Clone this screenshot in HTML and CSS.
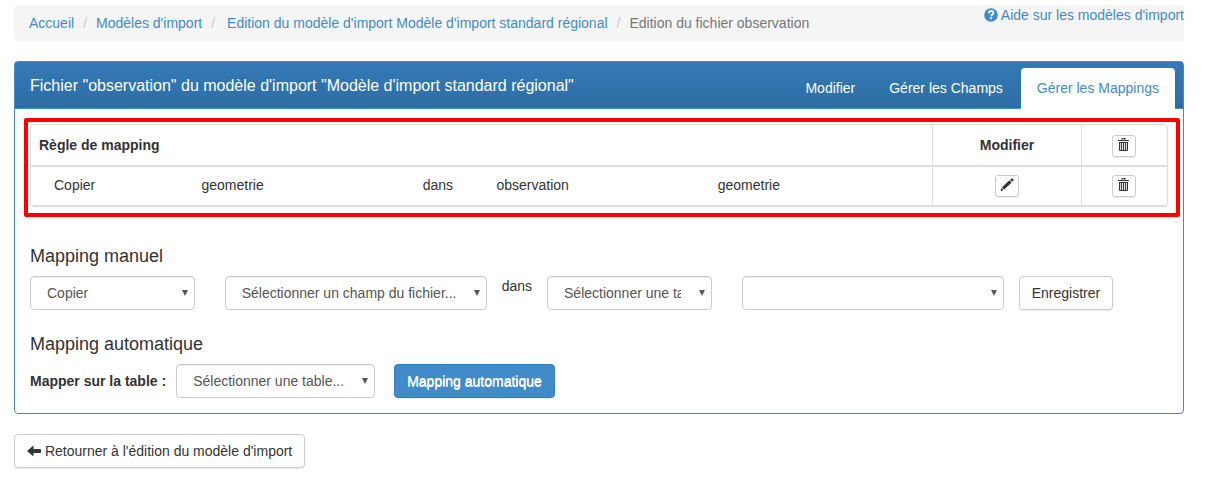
FILE: index.html
```html
<!DOCTYPE html>
<html lang="fr">
<head>
<meta charset="utf-8">
<title>Edition du fichier observation</title>
<link rel="stylesheet" href="styles.css">
</head>
<body>
<svg class="sprite" aria-hidden="true">
  <symbol id="trash" viewBox="0 0 12 14">
    <path d="M3.500 2V1q0-1 1-1h2q1 0 1 1v1H11v1H0V2zM4.500 1v1h2V1zM1 4h9v8q0 1-1 1H2q-1 0-1-1zM2.200 5v7h.9V5zm1.900 0v7h.9V5zm1.900 0v7h.9V5zm1.900 0v7h.9V5z" fill="currentColor" fill-rule="evenodd"/>
  </symbol>
  <symbol id="pencil" viewBox="0 0 14 14">
    <path d="M10.200 1.700L11.500.5q.5-.5 1 0l1 1q.5.500 0 1l-1.300 1.300zM9.500 2.300l2.200 2.200-7.500 7L2 9.300zM1.500 9.900L3.700 12 .5 13.300z" fill="currentColor"/>
  </symbol>
  <symbol id="arrow" viewBox="0 0 14 12">
    <path d="M0 6L6.500.5V4H13q1 0 1 1v2q0 1-1 1H6.500v3.500z" fill="currentColor"/>
  </symbol>
  <symbol id="help" viewBox="0 0 14 14">
    <circle cx="7" cy="7" r="6.800" fill="currentColor"/>
    <path d="M4.700 5.300C4.800 3.700 5.700 3 7.100 3s2.300.8 2.300 2C9.400 6.600 7.200 6.500 7.200 8.300" fill="none" stroke="#fff" stroke-width="1.800"/>
    <path d="M6.200 9.300h2v1.900h-2z" fill="#fff"/>
  </symbol>
</svg>
<main class="page">
  <div class="topbar">
    <nav aria-label="Fil d'Ariane">
      <ol class="breadcrumb">
        <li><a href="#">Accueil</a></li>
        <li><a href="#">Modèles d'import</a></li>
        <li class="parent"><a href="#">Edition du modèle d'import Modèle d'import standard régional</a></li>
        <li class="current">Edition du fichier observation</li>
      </ol>
    </nav>
    <a class="help" href="#"><svg class="icon"><use href="#help"/></svg> Aide sur les modèles d'import</a>
  </div>

  <section class="panel">
    <header class="panel-header">
      <h1 class="panel-title">Fichier "observation" du modèle d'import "Modèle d'import standard régional"</h1>
      <nav class="tabs">
        <a class="tab" href="#">Modifier</a>
        <a class="tab" href="#">Gérer les Champs</a>
        <a class="tab active" href="#">Gérer les Mappings</a>
      </nav>
    </header>

    <div class="highlight">
      <table class="rules">
        <thead>
          <tr>
            <th class="rule">Règle de mapping</th>
            <th class="edit">Modifier</th>
            <th class="remove"><button class="btn btn-icon" type="button" aria-label="Tout supprimer"><svg class="icon-trash"><use href="#trash"/></svg></button></th>
          </tr>
        </thead>
        <tbody>
          <tr>
            <td>
              <div class="rule-grid">
                <span class="span-2">Copier</span>
                <span class="span-3">geometrie</span>
                <span>dans</span>
                <span class="span-3">observation</span>
                <span class="span-3">geometrie</span>
              </div>
            </td>
            <td class="edit"><button class="btn btn-icon" type="button" aria-label="Modifier"><svg class="icon-pencil"><use href="#pencil"/></svg></button></td>
            <td class="remove"><button class="btn btn-icon" type="button" aria-label="Supprimer"><svg class="icon-trash"><use href="#trash"/></svg></button></td>
          </tr>
        </tbody>
      </table>
    </div>

    <form class="form">
      <h2 class="form-title">Mapping manuel</h2>
      <div class="manual">
        <div class="col-2"><select class="select" aria-label="Action"><option>Copier</option></select></div>
        <div class="col-3"><select class="select" aria-label="Champ du fichier"><option>Sélectionner un champ du fichier...</option></select></div>
        <span>dans</span>
        <div class="col-2"><select class="select" aria-label="Table"><option>Sélectionner une table...</option></select></div>
        <div class="col-3"><select class="select" aria-label="Champ de la table"><option></option></select></div>
        <button class="btn" type="button">Enregistrer</button>
      </div>
    </form>

    <form class="form form-last">
      <h2 class="form-title">Mapping automatique</h2>
      <div class="auto">
        <label for="auto-table">Mapper sur la table :</label>
        <select class="select select-auto" id="auto-table"><option>Sélectionner une table...</option></select>
        <button class="btn btn-primary" type="button">Mapping automatique</button>
      </div>
    </form>
  </section>

  <a class="btn back" href="#"><svg class="icon"><use href="#arrow"/></svg> Retourner à l'édition du modèle d'import</a>
</main>
</body>
</html>
```

FILE: styles.css
```css
* { box-sizing: border-box; }

body {
  margin: 0;
  font: 14px/20px "Liberation Sans", Arial, sans-serif;
  color: #333;
  background: #fff;
}

a { color: #428bca; text-decoration: none; }

.sprite { display: none; }

.page { padding: 5px 34px 20px 14px; }

.topbar { position: relative; margin-bottom: 20px; }

.breadcrumb {
  display: flex;
  margin: 0;
  padding: 8px 15px;
  list-style: none;
  background: #f5f5f5;
  border-radius: 4px;
}
.breadcrumb li + li::before {
  content: "/";
  padding: 0 9px;
  color: #ccc;
}
.breadcrumb .parent::before { padding-right: 12px; }
.breadcrumb .current { color: #777; }

.help { position: absolute; top: 0; right: 0; }

.icon {
  width: 14px;
  height: 14px;
  vertical-align: -2px;
}

.panel {
  border: 1px solid #428bca;
  border-radius: 4px;
  margin-bottom: 20px;
}

.panel-header {
  display: flex;
  justify-content: space-between;
  align-items: flex-end;
  padding: 6px 8px 0 15px;
  color: #fff;
  background: linear-gradient(#337ab7, #2e6da4);
  border-bottom: 1px solid #428bca;
}

.panel-title {
  align-self: flex-start;
  margin: 8px 0 0;
  font-size: 16px;
  font-weight: normal;
  line-height: 20px;
}

.tabs { display: flex; gap: 2px; margin-bottom: -1px; }
.tab {
  padding: 10px 16px 11px;
  color: #fff;
  border-radius: 4px 4px 0 0;
}
.tab.active { color: #428bca; background: #fff; }

.highlight {
  margin: 9px 3px 0 9px;
  padding: 2px 8px 6px 2px;
  border: 4px solid #f00;
  border-radius: 2px;
}

.rules {
  width: 100%;
  table-layout: fixed;
  border: 1px solid #ddd;
  border-radius: 4px;
  border-spacing: 0;
}
.rules th, .rules td {
  padding: 8px;
  text-align: left;
  vertical-align: top;
  border-bottom: 1px solid #ddd;
}
.rules th { padding-top: 10px; border-bottom-width: 2px; }
.rules .edit, .rules .remove {
  text-align: center;
  border-left: 1px solid #ddd;
}
.rules .edit { width: 149px; }
.rules .remove { width: 86px; padding-right: 9px; }

.rule-grid { display: grid; grid-template-columns: repeat(12, 1fr); }
.rule-grid span { padding-left: 15px; }
.rule-grid .span-2 { grid-column: span 2; }
.rule-grid .span-3 { grid-column: span 3; }

.btn {
  display: inline-block;
  padding: 6px 12px;
  font: inherit;
  color: #333;
  background: #fff;
  border: 1px solid #ccc;
  border-radius: 4px;
  box-shadow: 0 1px 1px rgba(0, 0, 0, .08);
  white-space: nowrap;
}
.btn-primary {
  color: #fff;
  text-shadow: 0 1px 0 #fff;
  background: #428bca;
  border-color: #357ebd;
}
.btn-icon {
  display: flex;
  justify-content: center;
  align-items: flex-start;
  width: 24px;
  height: 22px;
  margin: 0 auto;
  padding: 2px 4px;
  border-radius: 3px;
}
.icon-trash { width: 12px; height: 14px; }
.icon-pencil { width: 14px; height: 14px; }

.form { padding: 29px 0 0; }
.form + .form { padding-top: 24px; }
.form-last { padding-bottom: 15px; }

.form-title {
  margin: 0 15px 10px;
  font-size: 18px;
  font-weight: normal;
  line-height: 20px;
}

.manual { display: flex; align-items: flex-start; }
.col-2 { flex: 0 0 calc(100% / 6); padding: 0 15px; }
.col-3 { flex: 0 0 25%; padding: 0 15px; }

.select {
  display: block;
  width: 100%;
  height: 34px;
  padding: 6px 30px 6px 16px;
  font: inherit;
  color: #555;
  appearance: none;
  background: #fff url("data:image/svg+xml,%3Csvg xmlns='http://www.w3.org/2000/svg' width='6' height='6'%3E%3Cpath d='M0 0h6L3 6z' fill='%23555'/%3E%3C/svg%3E") no-repeat right 6px center;
  border: 1px solid #ccc;
  border-radius: 4px;
  box-shadow: inset 0 1px 1px rgba(0, 0, 0, .075);
}

.auto { display: flex; align-items: center; padding: 0 15px; }
.auto label { margin-right: 10px; font-weight: bold; }
.select-auto { width: 199px; margin-right: 19px; }
```
